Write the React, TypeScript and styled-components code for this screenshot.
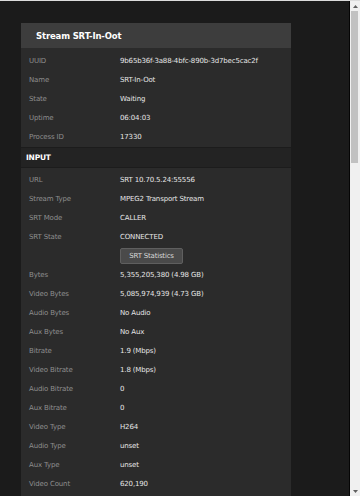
import { createGlobalStyle } from 'styled-components';
import styled from 'styled-components';

const GlobalStyle = createGlobalStyle`
    html, body {
        margin: 0;
        padding: 0;
        background: #1b1b1b;
    }

    body {
        font-family: 'DejaVu Sans', Verdana, sans-serif;
        overflow: hidden;
    }
`;

const Window = styled.div`
    display: flex;
    width: 360px;
    height: 496px;
    box-sizing: border-box;
    border-top: 1px solid #dcdcdc;
    overflow: hidden;
`;

const Viewport = styled.main`
    flex: 1;
    min-width: 0;
    background: #1b1b1b;
    border-right: 1px solid #050505;
    padding: 22px 0 0 21px;
    overflow: hidden;
`;

const Card = styled.section`
    width: 270px;
    background: #2b2b2b;
    padding-bottom: 20px;
`;

const CardHeader = styled.h1`
    display: flex;
    align-items: center;
    height: 25px;
    margin: 0;
    padding-left: 15px;
    background: #3d3d3d;
    color: #ffffff;
    font-size: 8.5px;
    font-weight: bold;
    letter-spacing: -0.15px;
`;

const Rows = styled.div<{ $first?: boolean }>`
    padding-top: ${props => (props.$first ? 3 : 2)}px;
`;

const Row = styled.div`
    display: grid;
    grid-template-columns: 91px 1fr;
    align-items: center;
    height: 19px;
    padding-left: 8px;
    font-size: 7px;
    letter-spacing: -0.15px;
`;

const Label = styled.span`
    color: #8e8e8e;
`;

const Value = styled.span`
    color: #e6e6e6;
    white-space: nowrap;
`;

const SectionHeader = styled.h2`
    display: flex;
    align-items: center;
    height: 19px;
    margin: 1px 0 0;
    padding-left: 5px;
    background: #232323;
    border-top: 1px solid #1c1c1c;
    border-bottom: 1px solid #1c1c1c;
    color: #ffffff;
    font-size: 7.5px;
    font-weight: bold;
    letter-spacing: -0.2px;
`;

const Button = styled.button`
    width: 63px;
    height: 16px;
    padding: 0;
    background: #4a4a4a;
    border: 1px solid #5f5f5f;
    border-radius: 2px;
    color: #d8d8d8;
    font-family: inherit;
    font-size: 7px;
    letter-spacing: -0.2px;
`;

const Scrollbar = styled.div`
    display: flex;
    flex-direction: column;
    width: 10px;
    background: #f0f0f0;
`;

const Arrow = styled.div`
    display: flex;
    align-items: center;
    justify-content: center;
    height: 10px;
`;

const Track = styled.div`
    flex: 1;
    padding: 0 2px 0 1px;
`;

const Thumb = styled.div`
    height: 152px;
    background: #c1c1c1;
`;

const streamInfo: [string, string][] = [
    ['UUID', '9b65b36f-3a88-4bfc-890b-3d7bec5cac2f'],
    ['Name', 'SRT-In-Oot'],
    ['State', 'Waiting'],
    ['Uptime', '06:04:03'],
    ['Process ID', '17330'],
];

const inputInfo: [string, string][] = [
    ['URL', 'SRT 10.70.5.24:55556'],
    ['Stream Type', 'MPEG2 Transport Stream'],
    ['SRT Mode', 'CALLER'],
    ['SRT State', 'CONNECTED'],
];

const inputStats: [string, string][] = [
    ['Bytes', '5,355,205,380 (4.98 GB)'],
    ['Video Bytes', '5,085,974,939 (4.73 GB)'],
    ['Audio Bytes', 'No Audio'],
    ['Aux Bytes', 'No Aux'],
    ['Bitrate', '1.9 (Mbps)'],
    ['Video Bitrate', '1.8 (Mbps)'],
    ['Audio Bitrate', '0'],
    ['Aux Bitrate', '0'],
    ['Video Type', 'H264'],
    ['Audio Type', 'unset'],
    ['Aux Type', 'unset'],
    ['Video Count', '620,190'],
];

function InfoRow({ label, value }: { label: string; value: string }) {
    return (
        <Row>
            <Label>{label}</Label>
            <Value>{value}</Value>
        </Row>
    );
}

export default function App() {
    return (
        <>
            <GlobalStyle />
            <Window>
                <Viewport>
                    <Card>
                        <CardHeader>Stream SRT-In-Oot</CardHeader>
                        <Rows $first>
                            {streamInfo.map(([l, v]) => (
                                <InfoRow key={l} label={l} value={v} />
                            ))}
                        </Rows>
                        <SectionHeader>INPUT</SectionHeader>
                        <Rows>
                            {inputInfo.map(([l, v]) => (
                                <InfoRow key={l} label={l} value={v} />
                            ))}
                            <Row>
                                <span />
                                <span>
                                    <Button type="button">SRT Statistics</Button>
                                </span>
                            </Row>
                            {inputStats.map(([l, v]) => (
                                <InfoRow key={l} label={l} value={v} />
                            ))}
                        </Rows>
                    </Card>
                </Viewport>
                <Scrollbar>
                    <Arrow>
                        <svg width="5" height="3" viewBox="0 0 5 3">
                            <path d="M0 3 L2.5 0 L5 3 Z" fill="#606060" />
                        </svg>
                    </Arrow>
                    <Track>
                        <Thumb />
                    </Track>
                    <Arrow>
                        <svg width="5" height="3" viewBox="0 0 5 3">
                            <path d="M0 0 L2.5 3 L5 0 Z" fill="#606060" />
                        </svg>
                    </Arrow>
                </Scrollbar>
            </Window>
        </>
    );
}
